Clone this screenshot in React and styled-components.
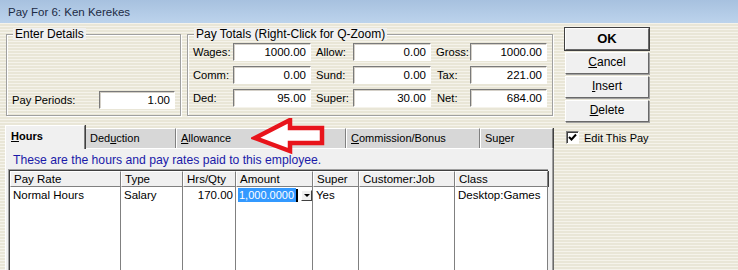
import React from "react";
import styled, { createGlobalStyle } from "styled-components";

const GlobalStyle = createGlobalStyle`
  html, body {
    margin: 0;
    padding: 0;
    overflow: hidden;
  }
  body {
    font-family: "Liberation Sans", Arial, sans-serif;
    font-size: 11px;
    color: #000;
  }
`;

const Window = styled.div`
  width: 738px;
  height: 270px;
  overflow: hidden;
  background: repeating-linear-gradient(
    to bottom,
    #e9e6d7 0px,
    #e9e6d7 2px,
    #f5f3eb 2px,
    #f5f3eb 3px
  );
`;

const TitleBar = styled.div`
  height: 23px;
  line-height: 24px;
  padding-left: 8px;
  font-size: 11.5px;
  color: #1c2a44;
  background: linear-gradient(to bottom, #a7c1df, #bcd3ec);
`;

const Body = styled.div`
  display: flex;
  padding: 5px 0 0 5px;
`;

const LeftCol = styled.div`
  width: 548px;
  display: flex;
  flex-direction: column;
`;

const TopRow = styled.div`
  display: flex;
  gap: 6px;
  margin-left: 1px;
  height: 88px;
`;

const Group = styled.fieldset`
  box-sizing: border-box;
  margin: 0;
  height: 88px;
  width: ${(p) => p.$w}px;
  padding: 3px 5px 6px 5px;
  border: 1px solid #a0a0a0;
  box-shadow: inset 1px 1px 0 #fff, 1px 1px 0 #fff;
  display: flex;
  flex-direction: column;
  justify-content: ${(p) => (p.$bottom ? "flex-end" : "flex-start")};
`;

const Legend = styled.legend`
  font-size: 12px;
  line-height: 12px;
  padding: 0 2px;
  margin-left: 1px;
  background: #f0f0f0;
`;

const FieldRow = styled.div`
  display: flex;
  align-items: center;
  height: 18px;
`;

const Label = styled.span`
  width: ${(p) => p.$w}px;
  padding-left: ${(p) => p.$pl || 0}px;
  font-size: 11.2px;
  white-space: nowrap;
`;

const Field = styled.div`
  box-sizing: border-box;
  width: ${(p) => p.$w}px;
  height: 18px;
  background: #fff;
  border-top: 1px solid #7a7a7a;
  border-left: 1px solid #7a7a7a;
  border-right: 1px solid #fff;
  border-bottom: 1px solid #fff;
  box-shadow: inset 1px 1px 0 #d4d0c8;
  text-align: right;
  padding-right: 4px;
  font-size: 11.5px;
  line-height: 17px;
`;

const TotalsGrid = styled.div`
  display: grid;
  grid-template-columns: 40px 78px 42px 78px 39px 77px;
  grid-auto-rows: 18px;
  row-gap: 5px;
  align-items: center;
`;

const TabsRow = styled.div`
  display: flex;
  align-items: flex-end;
  height: 24px;
  margin-top: 8px;
  position: relative;
`;

const Tab = styled.div`
  box-sizing: border-box;
  width: ${(p) => p.$w}px;
  height: ${(p) => (p.$active ? 24 : 20)}px;
  padding-left: ${(p) => (p.$active ? 5 : 4)}px;
  font-size: 11px;
  font-weight: ${(p) => (p.$active ? "bold" : "normal")};
  line-height: ${(p) => (p.$active ? 20 : 19)}px;
  background: ${(p) => (p.$active ? "#f0f0f0" : "#d7d7d7")};
  border-top: 1px solid #fff;
  border-left: 1px solid #fff;
  border-right: 1px solid #808080;
  box-shadow: 1px 0 0 #404040;
  position: relative;
  z-index: ${(p) => (p.$active ? 2 : 1)};
  margin-bottom: ${(p) => (p.$active ? -1 : 0)}px;
  white-space: nowrap;
`;

const Arrow = styled.svg`
  position: absolute;
  left: 246px;
  top: -6px;
  z-index: 3;
`;

const Panel = styled.div`
  box-sizing: border-box;
  height: 124px;
  background: #f0f0f0;
  border-top: 1px solid #fff;
  border-left: 1px solid #fff;
  border-right: 1px solid #a0a0a0;
  box-shadow: 1px 0 0 #696969;
  padding: 3px 4px 0 2px;
  position: relative;
  z-index: 1;
`;

const Note = styled.div`
  color: #1a1aa8;
  font-size: 12.2px;
  line-height: 16px;
  padding-left: 5px;
  margin-bottom: 1px;
`;

const Grid = styled.div`
  display: grid;
  grid-template-columns: 111px 62px 53px 77px 46px 96px 93px;
  grid-template-rows: 16px 16px 90px;
  border-left: 1px solid #a0a0a0;
  border-top: 1px solid #a0a0a0;
  box-shadow: inset 1px 1px 0 #404040;
  padding: 1px 0 0 1px;
  background: #fff;
`;

const HeadCell = styled.div`
  box-sizing: border-box;
  background: #f0f0f0;
  border-top: 1px solid #fff;
  border-left: 1px solid #fff;
  border-right: 1px solid #808080;
  border-bottom: 1px solid #808080;
  box-shadow: 1px 0 0 #404040;
  padding-left: 3px;
  font-size: 11.5px;
  line-height: 14px;
  white-space: nowrap;
  overflow: hidden;
`;

const Cell = styled.div`
  box-sizing: border-box;
  border-right: 1px solid #808080;
  padding: 0 ${(p) => (p.$right ? 2 : 0)}px 0 3px;
  text-align: ${(p) => (p.$right ? "right" : "left")};
  font-size: 11.5px;
  line-height: 16px;
  white-space: nowrap;
  overflow: hidden;
`;

const EditCell = styled(Cell)`
  display: flex;
  align-items: center;
  padding-left: 2px;
  font-size: 11px;
`;

const Selected = styled.span`
  background: #3399ff;
  color: #fff;
  line-height: 14px;
  padding: 0 2px 0 1px;
`;

const Caret = styled.span`
  width: 2px;
  height: 13px;
  background: #000;
`;

const DropBtn = styled.span`
  box-sizing: border-box;
  flex: none;
  width: 11px;
  height: 11px;
  margin-left: 3px;
  background: #f0f0f0;
  border-top: 1px solid #fff;
  border-left: 1px solid #fff;
  border-right: 1px solid #404040;
  border-bottom: 1px solid #404040;
  display: flex;
  align-items: center;
  justify-content: center;
  &::after {
    content: "";
    border-left: 3px solid transparent;
    border-right: 3px solid transparent;
    border-top: 3px solid #000;
  }
`;

const RightCol = styled.div`
  display: flex;
  flex-direction: column;
  margin-left: 12px;
  width: 84px;
`;

const Button = styled.div`
  box-sizing: border-box;
  width: 84px;
  height: 22px;
  margin-bottom: 2px;
  background: #f0f0f0;
  border-top: 1px solid #fff;
  border-left: 1px solid #fff;
  border-right: 1px solid #696969;
  border-bottom: 1px solid #696969;
  box-shadow: ${(p) => (p.$default ? "0 0 0 1px #404040" : "1px 1px 0 #a0a0a0")};
  text-align: center;
  font-size: ${(p) => (p.$default ? 13 : 12)}px;
  font-weight: ${(p) => (p.$default ? "bold" : "normal")};
  line-height: 19px;
`;

const CheckRow = styled.div`
  display: flex;
  align-items: center;
  gap: 5px;
  margin-top: 7px;
  margin-left: 1px;
  font-size: 11px;
  white-space: nowrap;
`;

const CheckBox = styled.span`
  box-sizing: border-box;
  width: 13px;
  height: 13px;
  background: #fff;
  border-top: 1px solid #808080;
  border-left: 1px solid #808080;
  border-right: 1px solid #fff;
  border-bottom: 1px solid #fff;
  box-shadow: inset 1px 1px 0 #404040;
  display: flex;
  align-items: center;
  justify-content: center;
`;

const cols = [
  { name: "Pay Rate" },
  { name: "Type" },
  { name: "Hrs/Qty" },
  { name: "Amount" },
  { name: "Super" },
  { name: "Customer:Job" },
  { name: "Class" },
];

const App = () => {
  return (
    <>
      <GlobalStyle />
      <Window>
        <TitleBar>Pay For 6: Ken Kerekes</TitleBar>
        <Body>
          <LeftCol>
            <TopRow>
              <Group $w={177} $bottom>
                <Legend>Enter Details</Legend>
                <FieldRow>
                  <Label $w={87}>Pay Periods:</Label>
                  <Field $w={76}>1.00</Field>
                </FieldRow>
              </Group>
              <Group $w={365}>
                <Legend>Pay Totals (Right-Click for Q-Zoom)</Legend>
                <TotalsGrid>
                  <Label>Wages:</Label>
                  <Field $w={78}>1000.00</Field>
                  <Label $pl={5}>Allow:</Label>
                  <Field $w={78}>0.00</Field>
                  <Label $pl={5}>Gross:</Label>
                  <Field $w={77}>1000.00</Field>

                  <Label>Comm:</Label>
                  <Field $w={78}>0.00</Field>
                  <Label $pl={5}>Sund:</Label>
                  <Field $w={78}>0.00</Field>
                  <Label $pl={6}>Tax:</Label>
                  <Field $w={77}>221.00</Field>

                  <Label>Ded:</Label>
                  <Field $w={78}>95.00</Field>
                  <Label $pl={5}>Super:</Label>
                  <Field $w={78}>30.00</Field>
                  <Label $pl={6}>Net:</Label>
                  <Field $w={77}>684.00</Field>
                </TotalsGrid>
              </Group>
            </TopRow>

            <TabsRow>
              <Tab $w={80} $active>
                <u>H</u>ours
              </Tab>
              <Tab $w={91}>
                Ded<u>u</u>ction
              </Tab>
              <Tab $w={170}>
                <u>A</u>llowance
              </Tab>
              <Tab $w={134}>
                <u>C</u>ommission/Bonus
              </Tab>
              <Tab $w={73}>
                Su<u>p</u>er
              </Tab>
              <Arrow width="78" height="40" viewBox="0 0 78 40">
                <path
                  d="M4 20 L39 2 L39 10 L71 10 L71 25 L39 25 L39 33 Z"
                  fill="#fff"
                  stroke="#e8141b"
                  strokeWidth="4.5"
                  strokeLinejoin="miter"
                />
              </Arrow>
            </TabsRow>

            <Panel>
              <Note>These are the hours and pay rates paid to this employee.</Note>
              <Grid>
                {cols.map((c) => (
                  <HeadCell key={c.name}>{c.name}</HeadCell>
                ))}
                <Cell>Normal Hours</Cell>
                <Cell>Salary</Cell>
                <Cell $right>170.00</Cell>
                <EditCell>
                  <Selected>1,000.0000</Selected>
                  <Caret />
                  <DropBtn />
                </EditCell>
                <Cell>Yes</Cell>
                <Cell />
                <Cell>Desktop:Games</Cell>
                {cols.map((c) => (
                  <Cell key={"f" + c.name} />
                ))}
              </Grid>
            </Panel>
          </LeftCol>

          <RightCol>
            <Button $default>OK</Button>
            <Button>
              <u>C</u>ancel
            </Button>
            <Button>
              <u>I</u>nsert
            </Button>
            <Button>
              <u>D</u>elete
            </Button>
            <CheckRow>
              <CheckBox>
                <svg width="9" height="9" viewBox="0 0 9 9">
                  <path d="M1 4 L3.5 6.5 L8 1.5" fill="none" stroke="#000" strokeWidth="2" />
                </svg>
              </CheckBox>
              Edit This Pay
            </CheckRow>
          </RightCol>
        </Body>
      </Window>
    </>
  );
};

export default App;
